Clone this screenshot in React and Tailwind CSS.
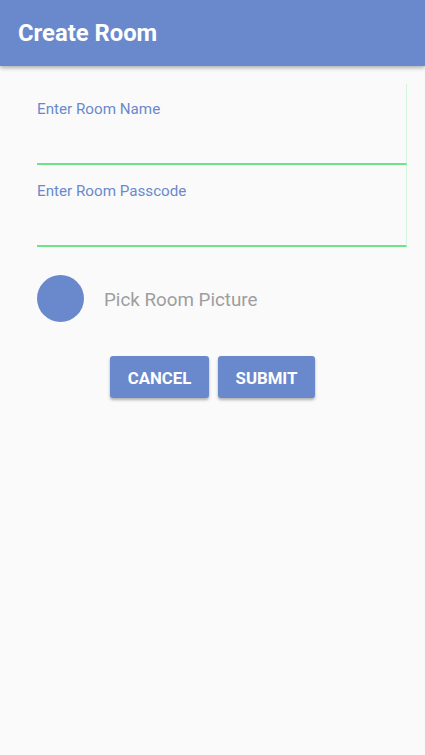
import React, { useState } from 'react';

const App = () => {
  const [name, setName] = useState('');
  const [passcode, setPasscode] = useState('');

  return (
    <div className="min-h-[755px] bg-[#fafafa] font-['Roboto',sans-serif]">
      <div className="h-[66px] bg-[#6a89cc] flex items-center px-[18px] pt-[2px] shadow-[0_2px_4px_rgba(0,0,0,0.3)] relative">
        <h1 className="text-white text-[23.8px] font-bold">Create Room</h1>
      </div>

      <div className="pl-[37px] pr-[18px] pt-[18px]">
        <div className="h-[81px] border-r border-[#d6f5dd] border-b-2 border-b-[#6ee38a] flex flex-col">
          <label className="text-[#6a89cc] text-[15.2px] pt-[14px]">Enter Room Name</label>
          <input
            value={name}
            onChange={(e) => setName(e.target.value)}
            className="flex-1 bg-transparent outline-none text-[16px]"
          />
        </div>
        <div className="h-[82px] border-r border-[#d6f5dd] border-b-2 border-b-[#6ee38a] flex flex-col">
          <label className="text-[#6a89cc] text-[15.2px] pt-[15px]">Enter Room Passcode</label>
          <input
            type="password"
            value={passcode}
            onChange={(e) => setPasscode(e.target.value)}
            className="flex-1 bg-transparent outline-none text-[16px]"
          />
        </div>

        <div className="flex items-center mt-[28px] gap-[20px]">
          <div className="w-[47px] h-[47px] rounded-full bg-[#6a89cc]" />
          <span className="text-[#9e9e9e] text-[18.8px] pt-[3px]">Pick Room Picture</span>
        </div>
      </div>

      <div className="flex justify-center gap-[9px] mt-[34px]">
        <button className="w-[99px] h-[42px] bg-[#6a89cc] text-white text-[16.8px] font-bold rounded-[3px] shadow-[0_2px_3px_rgba(0,0,0,0.3)] pt-[3px]">
          CANCEL
        </button>
        <button className="w-[97px] h-[42px] bg-[#6a89cc] text-white text-[16.8px] font-bold rounded-[3px] shadow-[0_2px_3px_rgba(0,0,0,0.3)] pt-[3px]">
          SUBMIT
        </button>
      </div>
    </div>
  );
};

export default App;
